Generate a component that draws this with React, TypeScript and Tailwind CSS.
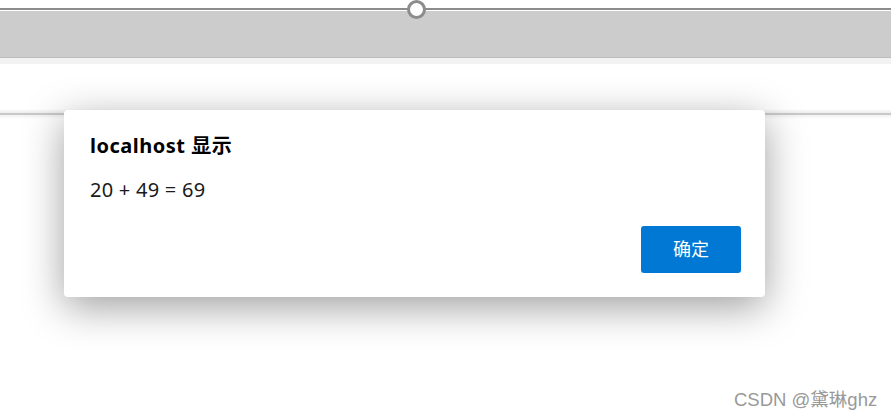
export default function App() {
  return (
    <div className="relative w-[891px] h-[419px] overflow-hidden bg-white font-['Noto_Sans','Noto_Sans_CJK_SC',sans-serif]">
      {/* Browser chrome strips */}
      <div className="flex flex-col">
        <div className="h-[8px] bg-white" />
        <div className="h-[2px] bg-[#8c8c8c]" />
        <div className="h-[1px] bg-white" />
        <div className="h-[46px] bg-[#cccccc]" />
        <div className="h-[1px] bg-[#bdbdbd]" />
        <div className="h-[6px] bg-[#f2f2f2]" />
        <div className="h-[45px] bg-white" />
        <div className="h-[4px] bg-gradient-to-b from-white to-[#ececec]" />
        <div className="h-[2px] bg-[#c9c9c9]" />
        <div className="h-[4px] bg-gradient-to-b from-[#f0f0f0] to-white" />
      </div>

      {/* Slider knob */}
      <div className="absolute left-[407px] top-[0px] w-[19px] h-[19px] rounded-full border-[3px] border-[#8c8c8c] bg-white" />

      {/* Alert dialog */}
      <div className="absolute left-[64px] top-[110px] w-[701px] h-[187px] rounded-[4px] bg-white shadow-[0_10px_40px_rgba(0,0,0,0.38)] flex flex-col px-[26px] pt-[23px] pb-[24px]">
        <div className="text-[20px] leading-[26px] font-bold tracking-[0.5px] text-black">localhost 显示</div>
        <div className="mt-[17px] text-[20px] leading-[28px] tracking-[0.25px] text-[#1a1a1a]">20 + 49 = 69</div>
        <div className="flex-1" />
        <div className="flex justify-end -mr-[2px]">
          <button className="w-[100px] h-[47px] rounded-[3px] bg-[#0078d4] text-white text-[18px]">确定</button>
        </div>
      </div>

      {/* Watermark */}
      <div className="absolute left-[734px] top-[391px] text-[18.5px] leading-none text-[#999999] font-['Liberation_Sans','Noto_Sans_CJK_SC',sans-serif]">CSDN @黛琳ghz</div>
    </div>
  );
}
